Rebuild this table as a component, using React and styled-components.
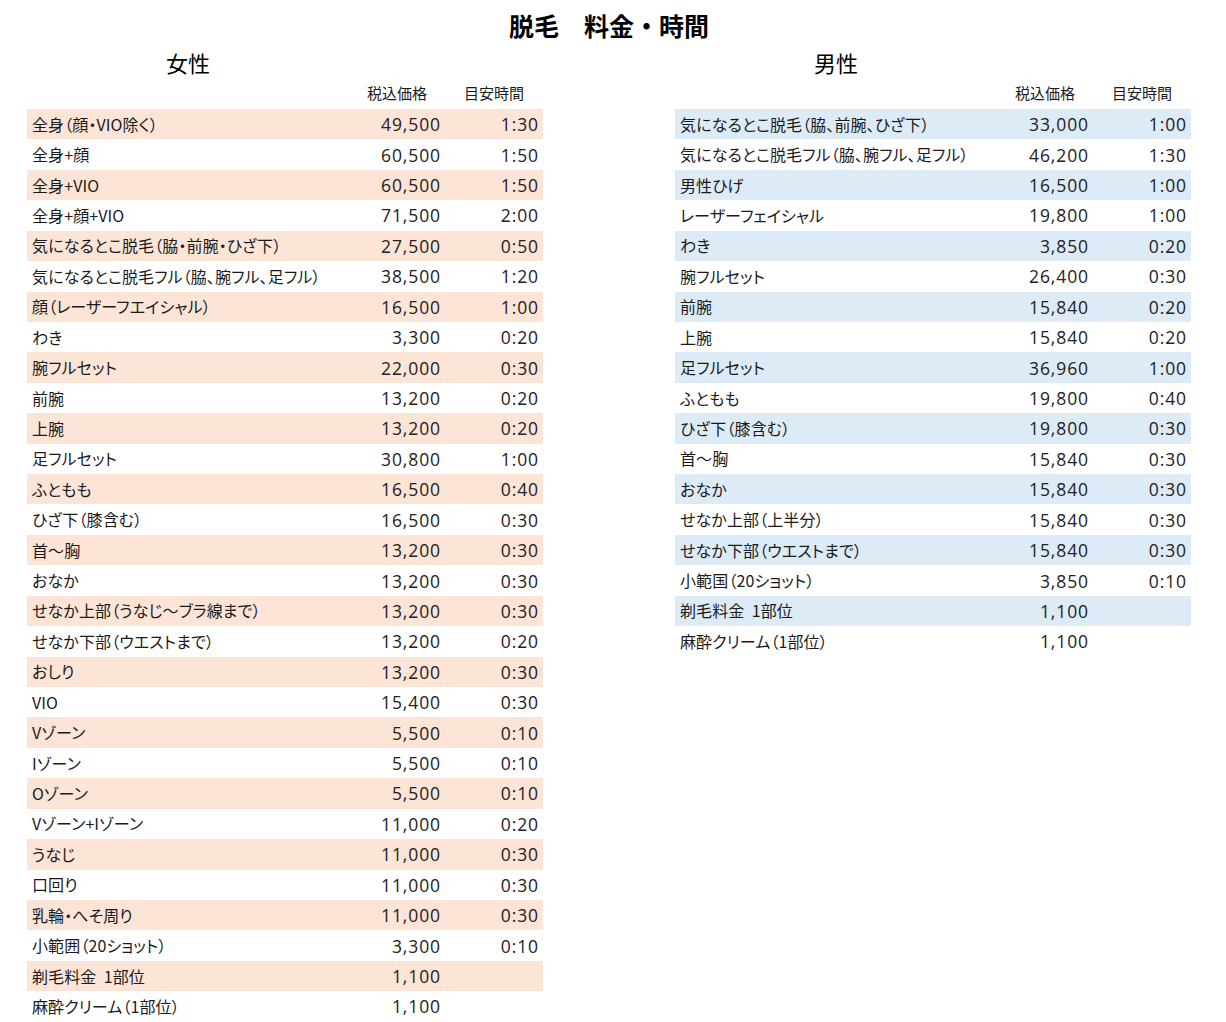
import React from "react";
import styled, { createGlobalStyle } from "styled-components";

const Global = createGlobalStyle`
  html, body { margin: 0; padding: 0; background: #ffffff; }
  body { font-family: "Noto Sans CJK JP", "Noto Sans", sans-serif; color: #1a1a1a; }
`;

const Page = styled.div`
  width: 1164px;
  padding: 0 0 0 27px;
`;

const Title = styled.h1`
  margin: 0;
  padding-top: 8px;
  height: 44px;
  box-sizing: border-box;
  line-height: 34px;
  font-size: 25px;
  font-weight: 700;
  text-align: center;
  color: #000;
`;

const Columns = styled.div`
  display: flex;
  justify-content: space-between;
  align-items: flex-start;
`;

const Panel = styled.section`
  width: 516px;
`;

const TitleRow = styled.div`
  display: grid;
  grid-template-columns: 322px 194px;
`;

const Subtitle = styled.h2`
  margin: 0;
  height: 36px;
  line-height: 36px;
  font-size: 22px;
  font-weight: 400;
  text-align: center;
  color: #000;
`;

const Head = styled.div`
  display: grid;
  grid-template-columns: 322px 96px 98px;
  height: 29px;
  line-height: 26px;
  font-size: 15px;
  font-feature-settings: "palt";
`;

const HeadCell = styled.div`
  text-align: center;
`;

const Row = styled.div`
  display: grid;
  grid-template-columns: 322px 96px 98px;
  height: 30.43px;
  align-items: center;
  background: ${(p) => (p.$shade ? p.$tint : "transparent")};
`;

const Label = styled.div`
  padding-left: 5px;
  white-space: pre;
  font-size: 16px;
  font-feature-settings: "palt";
  letter-spacing: 0.1px;
  line-height: 22px;
  padding-bottom: 1px;
`;

const Num = styled.div`
  text-align: right;
  padding-right: 4px;
  font-family: "Open Sans", "Noto Sans", sans-serif;
  font-size: 17.5px;
  letter-spacing: 0.9px;
  color: #222;
`;

const women = [
  ["全身（顔・VIO除く）", "49,500", "1:30"],
  ["全身+顔", "60,500", "1:50"],
  ["全身+VIO", "60,500", "1:50"],
  ["全身+顔+VIO", "71,500", "2:00"],
  ["気になるとこ脱毛（脇・前腕・ひざ下）", "27,500", "0:50"],
  ["気になるとこ脱毛フル（脇、腕フル、足フル）", "38,500", "1:20"],
  ["顔（レーザーフエイシャル）", "16,500", "1:00"],
  ["わき", "3,300", "0:20"],
  ["腕フルセット", "22,000", "0:30"],
  ["前腕", "13,200", "0:20"],
  ["上腕", "13,200", "0:20"],
  ["足フルセット", "30,800", "1:00"],
  ["ふともも", "16,500", "0:40"],
  ["ひざ下（膝含む）", "16,500", "0:30"],
  ["首～胸", "13,200", "0:30"],
  ["おなか", "13,200", "0:30"],
  ["せなか上部（うなじ～ブラ線まで）", "13,200", "0:30"],
  ["せなか下部（ウエストまで）", "13,200", "0:20"],
  ["おしり", "13,200", "0:30"],
  ["VIO", "15,400", "0:30"],
  ["Vゾーン", "5,500", "0:10"],
  ["Iゾーン", "5,500", "0:10"],
  ["Oゾーン", "5,500", "0:10"],
  ["Vゾーン+Iゾーン", "11,000", "0:20"],
  ["うなじ", "11,000", "0:30"],
  ["口回り", "11,000", "0:30"],
  ["乳輪・へそ周り", "11,000", "0:30"],
  ["小範囲（20ショット）", "3,300", "0:10"],
  ["剃毛料金  1部位", "1,100", ""],
  ["麻酔クリーム（1部位）", "1,100", ""],
];

const men = [
  ["気になるとこ脱毛（脇、前腕、ひざ下）", "33,000", "1:00"],
  ["気になるとこ脱毛フル（脇、腕フル、足フル）", "46,200", "1:30"],
  ["男性ひげ", "16,500", "1:00"],
  ["レーザーフェイシャル", "19,800", "1:00"],
  ["わき", "3,850", "0:20"],
  ["腕フルセット", "26,400", "0:30"],
  ["前腕", "15,840", "0:20"],
  ["上腕", "15,840", "0:20"],
  ["足フルセット", "36,960", "1:00"],
  ["ふともも", "19,800", "0:40"],
  ["ひざ下（膝含む）", "19,800", "0:30"],
  ["首～胸", "15,840", "0:30"],
  ["おなか", "15,840", "0:30"],
  ["せなか上部（上半分）", "15,840", "0:30"],
  ["せなか下部（ウエストまで）", "15,840", "0:30"],
  ["小範国（20ショット）", "3,850", "0:10"],
  ["剃毛料金  1部位", "1,100", ""],
  ["麻酔クリーム（1部位）", "1,100", ""],
];

function PriceTable({ title, rows, tint }) {
  return (
    <Panel>
      <TitleRow>
        <Subtitle>{title}</Subtitle>
      </TitleRow>
      <Head>
        <div />
        <HeadCell>税込価格</HeadCell>
        <HeadCell>目安時間</HeadCell>
      </Head>
      {rows.map(([label, price, time], i) => (
        <Row key={i} $shade={i % 2 === 0} $tint={tint}>
          <Label>{label}</Label>
          <Num>{price}</Num>
          <Num>{time}</Num>
        </Row>
      ))}
    </Panel>
  );
}

export default function App() {
  return (
    <>
      <Global />
      <Page>
        <Title>脱毛　料金・時間</Title>
        <Columns>
          <PriceTable title="女性" rows={women} tint="#fce4d6" />
          <PriceTable title="男性" rows={men} tint="#ddebf7" />
        </Columns>
      </Page>
    </>
  );
}
